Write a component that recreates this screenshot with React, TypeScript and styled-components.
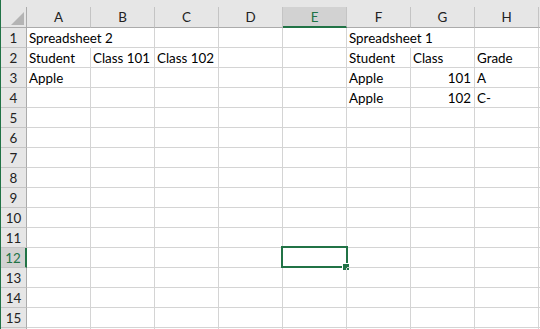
import React from 'react';
import styled, { createGlobalStyle } from 'styled-components';

const GlobalStyle = createGlobalStyle`
  body {
    margin: 0;
    background: #fff;
    overflow: hidden;
  }
`;

const GREEN = '#217346';
const FONT = `Lato, "Liberation Sans", sans-serif`;

const Frame = styled.div`
  border-left: 1px solid ${GREEN};
  height: 329px;
  width: 539px;
  overflow: hidden;
  font-family: ${FONT};
  font-size: 13.4px;
  color: #000;
`;

const TopStrip = styled.div`
  height: 7px;
  background: #e6e6e6;
`;

const Sheet = styled.div`
  display: grid;
  grid-template-columns: 26px repeat(8, 64px) 1fr;
  grid-template-rows: 21px repeat(16, 20px);
`;

const Corner = styled.div`
  background: #e6e6e6;
  border-right: 1px solid #ababab;
  border-bottom: 1px solid #ababab;
  display: flex;
  justify-content: flex-end;
  align-items: flex-end;
  padding: 0 2px 2px 0;
`;

const ColHead = styled.div<{ $active?: boolean }>`
  background: ${p => (p.$active ? '#d2d2d2' : '#e6e6e6')};
  color: ${p => (p.$active ? GREEN : '#222')};
  border-right: 1px solid #c4c4c4;
  border-bottom: ${p => (p.$active ? `2px solid ${GREEN}` : '1px solid #ababab')};
  display: flex;
  justify-content: center;
  align-items: center;
  padding-top: 2px;
  line-height: 1;
`;

const RowHead = styled.div<{ $active?: boolean }>`
  background: ${p => (p.$active ? '#d2d2d2' : '#e6e6e6')};
  color: ${p => (p.$active ? GREEN : '#222')};
  border-right: ${p => (p.$active ? `2px solid ${GREEN}` : '1px solid #ababab')};
  border-bottom: 1px solid #c4c4c4;
  display: flex;
  justify-content: center;
  align-items: flex-end;
  padding-bottom: 2px;
  line-height: 1;
`;

const Cell = styled.div<{ $right?: boolean; $spill?: boolean }>`
  position: relative;
  border-right: 1px solid ${p => (p.$spill ? 'transparent' : '#d4d4d4')};
  border-bottom: 1px solid #d4d4d4;
  display: flex;
  align-items: flex-end;
  justify-content: ${p => (p.$right ? 'flex-end' : 'flex-start')};
  padding: 0 3px 2px 2px;
  white-space: nowrap;
  overflow: visible;
  line-height: 1;
  min-width: 0;
`;

const Selection = styled.div`
  position: absolute;
  left: -2px;
  top: -2px;
  width: 67px;
  height: 22px;
  box-sizing: border-box;
  border: 2px solid ${GREEN};
  pointer-events: none;
`;

const FillHandle = styled.div`
  position: absolute;
  left: 59px;
  top: 15px;
  width: 6px;
  height: 6px;
  background: ${GREEN};
  border: 1px solid #fff;
`;

// column I only peeks in at the right edge, so its letter stays out of view
const cols = ['A', 'B', 'C', 'D', 'E', 'F', 'G', 'H', ''];

type CellData = { text: string; right?: boolean; spill?: boolean };

const data: Record<string, CellData> = {
  A1: { text: 'Spreadsheet 2', spill: true },
  A2: { text: 'Student' },
  B2: { text: 'Class 101' },
  C2: { text: 'Class 102' },
  A3: { text: 'Apple' },
  F1: { text: 'Spreadsheet 1', spill: true },
  F2: { text: 'Student' },
  G2: { text: 'Class' },
  H2: { text: 'Grade' },
  F3: { text: 'Apple' },
  G3: { text: '101', right: true },
  H3: { text: 'A' },
  F4: { text: 'Apple' },
  G4: { text: '102', right: true },
  H4: { text: 'C-' },
};

const active = { col: 'E', row: 12 };
const visibleRows = 15;

function App() {
  const rows = Array.from({ length: 16 }, (_, i) => i + 1);

  return (
    <Frame>
      <GlobalStyle />
      <TopStrip />
      <Sheet>
        <Corner>
          <svg width="13" height="13" viewBox="0 0 13 13">
            <polygon points="13,0 13,13 0,13" fill="#b4b4b4" />
          </svg>
        </Corner>
        {cols.map((c, i) => (
          <ColHead key={i} $active={c === active.col}>{c}</ColHead>
        ))}
        {rows.map(r => (
          <React.Fragment key={r}>
            <RowHead $active={r === active.row}>{r <= visibleRows ? r : ''}</RowHead>
            {cols.map((c, i) => {
              const d = c ? data[c + r] : undefined;
              const isActive = c === active.col && r === active.row;
              return (
                <Cell key={i} $right={d?.right} $spill={d?.spill}>
                  {d?.text}
                  {isActive && (
                    <Selection>
                      <FillHandle />
                    </Selection>
                  )}
                </Cell>
              );
            })}
          </React.Fragment>
        ))}
      </Sheet>
    </Frame>
  );
}

export default App;
